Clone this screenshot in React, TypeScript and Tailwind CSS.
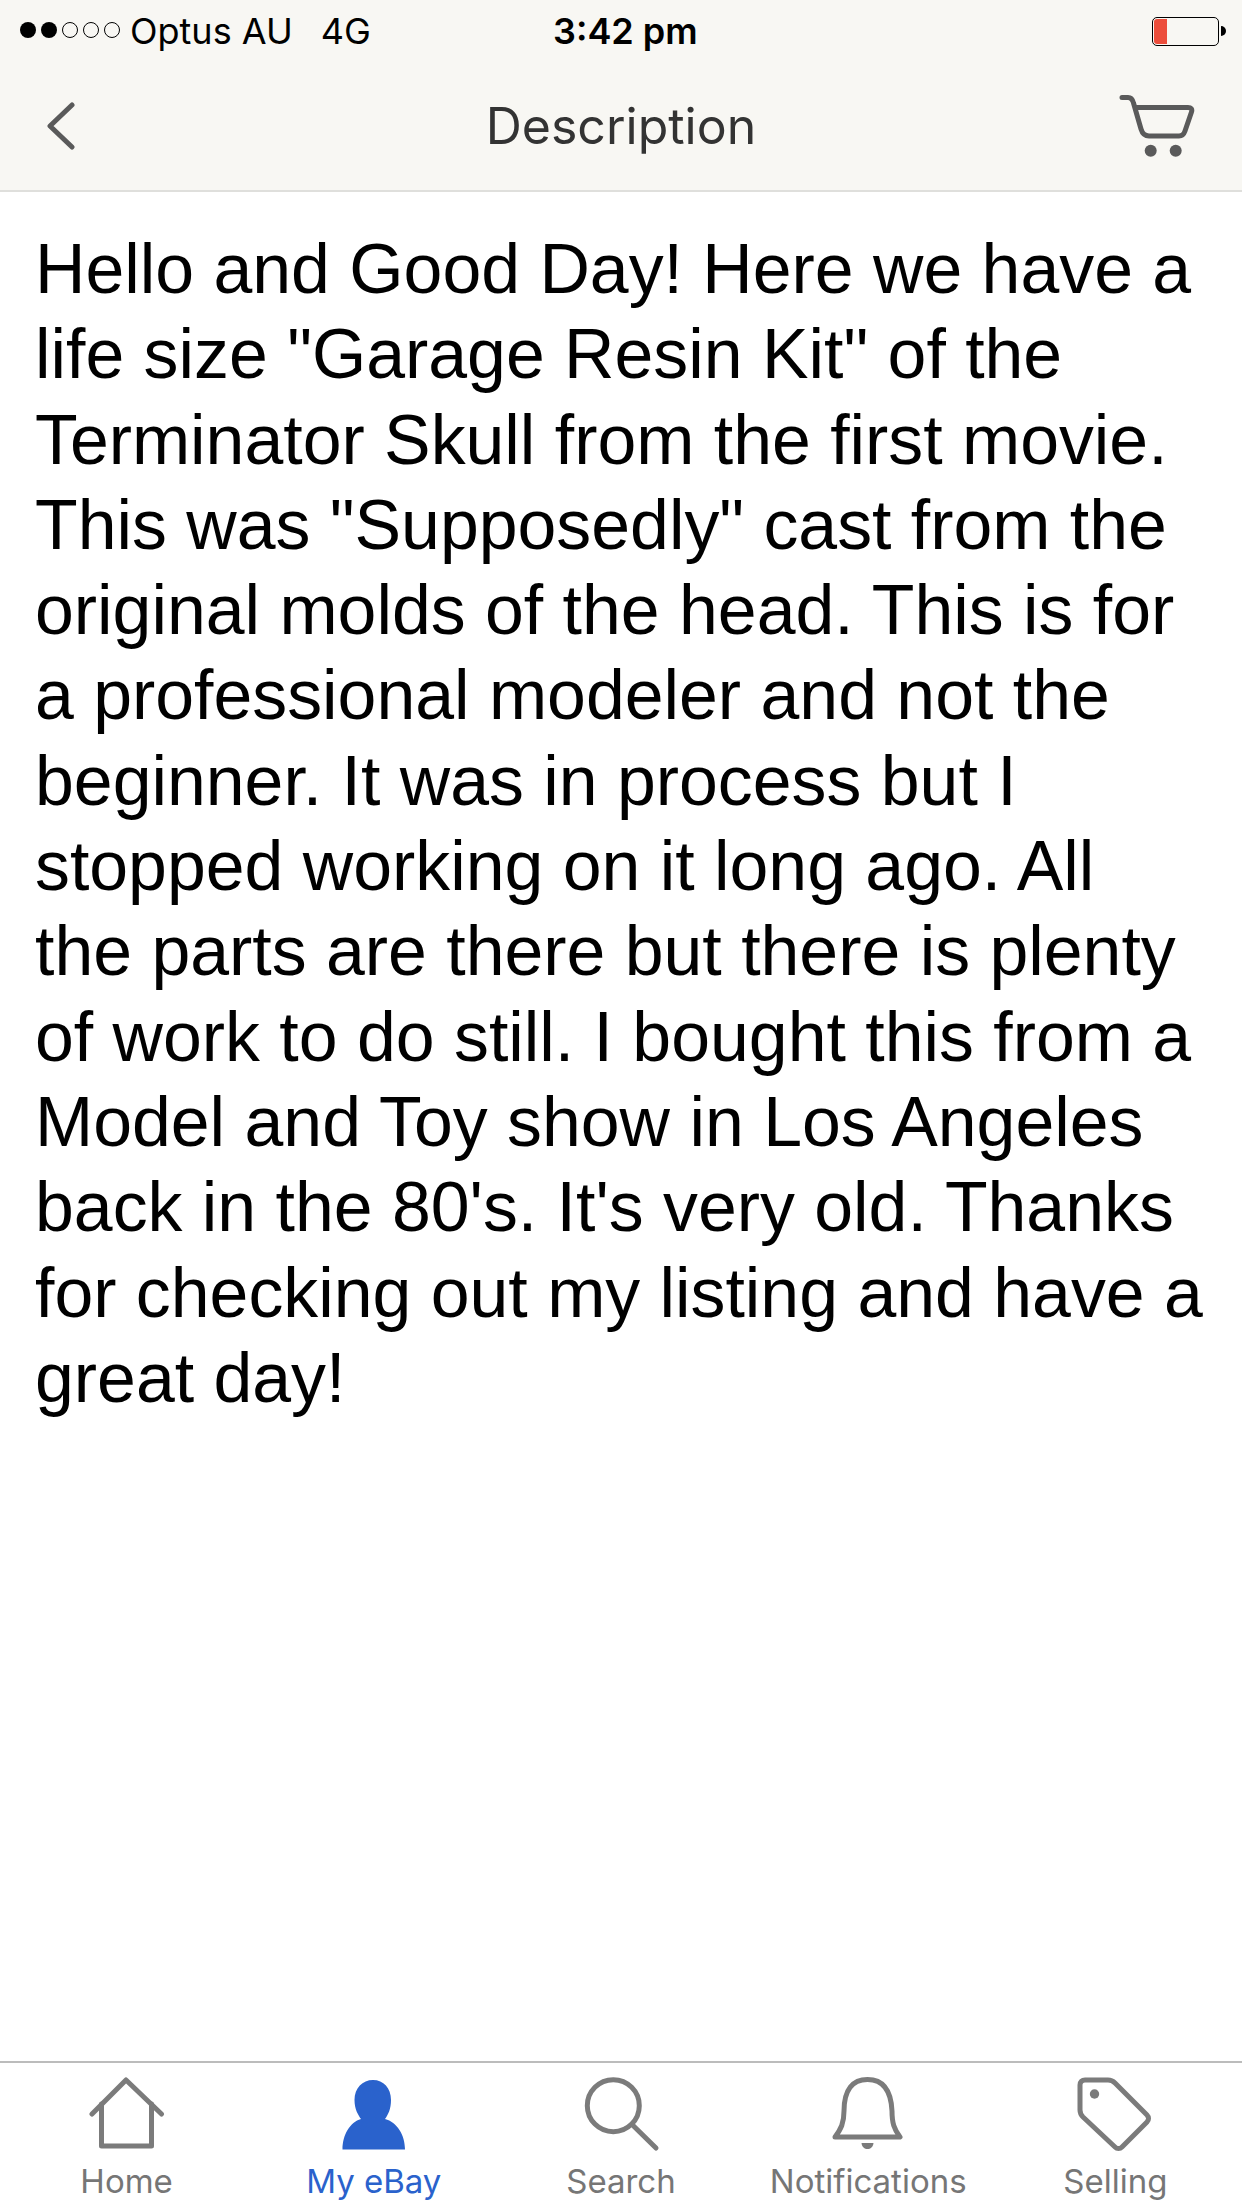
const lines = `Hello and Good Day! Here we have a life size "Garage Resin Kit" of the Terminator Skull from the first movie. This was "Supposedly" cast from the original molds of the head. This is for a professional modeler and not the beginner. It was in process but I stopped working on it long ago. All the parts are there but there is plenty of work to do still. I bought this from a Model and Toy show in Los Angeles back in the 80's. It's very old. Thanks for checking out my listing and have a great day!`;

const HomeIcon = () => (
  <svg width="76" height="76" viewBox="0 0 76 76" fill="none" stroke="#7b7b7b" strokeWidth="5" strokeLinecap="round" strokeLinejoin="round">
    <path d="M3 37 L37 3 L72.5 37" />
    <path d="M12.5 27 V69 H62.5 V27" />
  </svg>
);

const PersonIcon = () => (
  <svg width="76" height="76" viewBox="0 0 76 76" fill="#2a62cc">
    <path d="M37 3 C47.5 3 55 11 55 23 C55 32 52 38 49 42 C61 45 69 58 69 72.5 H6.5 C6.5 58 14 45 25 42 C22 38 18.5 32 18.5 23 C18.5 11 26.5 3 37 3 Z" />
  </svg>
);

const SearchIcon = () => (
  <svg width="78" height="76" viewBox="0 0 78 76" fill="none" stroke="#7b7b7b" strokeWidth="5" strokeLinecap="round">
    <circle cx="31.3" cy="28.7" r="26" />
    <path d="M51.3 48.7 L74 71" />
  </svg>
);

const BellIcon = () => (
  <svg width="72" height="76" viewBox="0 0 72 76" fill="none" stroke="#7b7b7b" strokeWidth="5" strokeLinejoin="round">
    <path d="M3 60 C9 52 12 46 12 34 C12 12 21 2.5 35.5 2.5 C50 2.5 59 12 60 34 C60 46 62 52 68 60 Z" />
    <path d="M29.5 66 H41.5 C41 70 38.5 72 35.5 72 C32.5 72 30 70 29.5 66 Z" fill="#7b7b7b" stroke="none" />
  </svg>
);

const TagIcon = () => (
  <svg width="76" height="76" viewBox="0 0 76 76" fill="none" stroke="#7b7b7b" strokeWidth="5" strokeLinejoin="round">
    <path d="M8 3 H31 C34 3 36 4 38 6 L70 38 C72 40 72 43 70 45 L45 70 C43 72 40 72 38 70 L6 40 C4 38 3 36 3 33 V8 C3 5 5 3 8 3 Z" />
    <circle cx="17.5" cy="17" r="4.7" fill="#7b7b7b" stroke="none" />
  </svg>
);

const tabs = [
  { label: "Home", icon: <HomeIcon />, active: false },
  { label: "My eBay", icon: <PersonIcon />, active: true },
  { label: "Search", icon: <SearchIcon />, active: false },
  { label: "Notifications", icon: <BellIcon />, active: false },
  { label: "Selling", icon: <TagIcon />, active: false },
];

export default function App() {
  return (
    <div className="flex h-[2208px] w-[1242px] flex-col bg-white font-['Liberation_Sans',sans-serif]">
      <div className="flex h-[192px] flex-col border-b-2 border-[#dfdfdc] bg-[#f8f7f3]">
        {/* status bar */}
        <div className="relative flex h-[62px] items-center pl-5 pr-4 font-['Inter',sans-serif] text-[36px] text-black">
          <div className="mb-[2px] flex gap-[5px]">
            <span className="h-4 w-4 rounded-full bg-black" />
            <span className="h-4 w-4 rounded-full bg-black" />
            <span className="h-4 w-4 rounded-full border border-black" />
            <span className="h-4 w-4 rounded-full border border-black" />
            <span className="h-4 w-4 rounded-full border border-black" />
          </div>
          <span className="ml-[10px]">Optus AU</span>
          <span className="ml-[28px]">4G</span>
          <span className="absolute left-[553px] font-semibold">3:42 pm</span>
          <div className="ml-auto flex items-center">
            <div className="h-[29px] w-[67px] rounded-[5px] border border-black p-[1px]">
              <div className="h-full w-[13px] rounded-l-[3px] bg-[#ec4e3c]" />
            </div>
            <div className="ml-[2px] h-[10px] w-[5px] rounded-r-full bg-black" />
          </div>
        </div>
        {/* nav */}
        <div className="relative flex flex-1 items-center justify-center">
          <svg className="absolute left-[46px] top-[40px]" width="30" height="48" viewBox="0 0 30 48" fill="none" stroke="#5a5a5a" strokeWidth="5" strokeLinecap="round" strokeLinejoin="round">
            <path d="M26 3 L4 24 L26 45" />
          </svg>
          <span className="font-['Inter',sans-serif] text-[50px] text-[#333]">Description</span>
          <svg className="absolute left-[1119px] top-[32px]" width="76" height="64" viewBox="0 0 76 64" fill="none" stroke="#5a5a5a" strokeWidth="5" strokeLinecap="round" strokeLinejoin="round">
            <path d="M3 3.5 H9 C12 3.5 13.5 5 14.5 9 L22 35 C23.5 40 26 42 30 42 H60 C63 42 65 40 66 37 L72.5 18 C73.5 15 72 13.5 69 13.5 H16" />
            <circle cx="31.7" cy="56.7" r="6" fill="#5a5a5a" stroke="none" />
            <circle cx="56.7" cy="56.7" r="6" fill="#5a5a5a" stroke="none" />
          </svg>
        </div>
      </div>

      <p className="flex-1 pl-[35px] pr-[36px] pt-[35px] text-[69.8px] leading-[85.3px] text-black">{lines}</p>

      <div className="grid h-[147px] grid-cols-5 border-t-2 border-[#bcbcbc] px-[3px]">
        {tabs.map((t) => (
          <div key={t.label} className="flex flex-col items-center pt-[14px]">
            <div className="flex h-[76px] items-center justify-center">{t.icon}</div>
            <span className={`mt-[6px] font-['Inter',sans-serif] text-[33px] leading-[44px] ${t.active ? "text-[#2a62cc]" : "text-[#767676]"}`}>{t.label}</span>
          </div>
        ))}
      </div>
    </div>
  );
}
